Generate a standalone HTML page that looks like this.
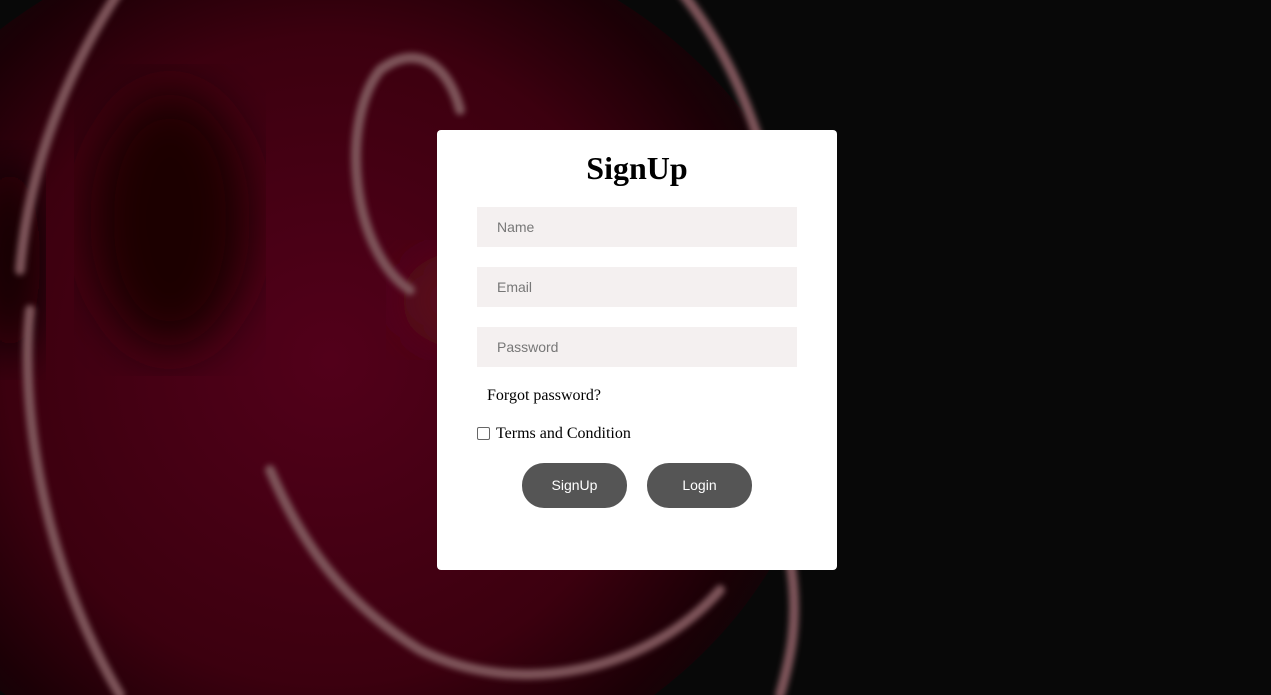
<!DOCTYPE html>
<html><head><meta charset="utf-8"><style>
html,body{margin:0;padding:0;width:1271px;height:695px;overflow:hidden;background:#080808;}
.bg{position:absolute;left:0;top:0;width:1271px;height:695px;display:block;}
.card{position:absolute;left:437px;top:130px;width:400px;height:440px;background:#fff;border-radius:4px;}
h1{position:absolute;left:0;width:400px;top:20px;margin:0;text-align:center;font:bold 32px "Liberation Serif",serif;color:#000;}
.in{position:absolute;left:40px;width:300px;height:40px;background:#f4f0f0;padding-left:20px;font:14px "Liberation Sans",sans-serif;color:#777;line-height:40px;}
.t{position:absolute;font:16px "Liberation Serif",serif;color:#000;}
.cb{position:absolute;left:40px;top:297px;width:11px;height:11px;border:1px solid #666;border-radius:2px;background:#fff;}
.btn{position:absolute;top:333px;width:105px;height:45px;border-radius:22px;background:#555;color:#fff;font:14px "Liberation Sans",sans-serif;text-align:center;line-height:45px;}
</style></head><body>
<svg class="bg" width="1271" height="695" viewBox="0 0 1271 695">
<defs>
<radialGradient id="r1" cx="330" cy="360" r="540" gradientUnits="userSpaceOnUse">
<stop offset="0" stop-color="#52001a"/><stop offset="0.6" stop-color="#3c000f"/><stop offset="0.82" stop-color="#1c0006"/><stop offset="1" stop-color="#080808"/></radialGradient>
<filter id="b"><feGaussianBlur stdDeviation="3"/></filter>
<filter id="b2"><feGaussianBlur stdDeviation="25"/></filter>
</defs>
<rect width="1271" height="695" fill="#080808"/>
<ellipse cx="330" cy="360" rx="500" ry="440" fill="url(#r1)"/>
<ellipse cx="170" cy="220" rx="80" ry="130" fill="#1a0005" filter="url(#b2)"/>
<ellipse cx="10" cy="260" rx="30" ry="100" fill="#100003" filter="url(#b2)"/>
<ellipse cx="470" cy="300" rx="70" ry="50" fill="#5a0a1e" filter="url(#b2)"/>
<g fill="none" stroke="#7e545a" stroke-width="10" stroke-linecap="round" filter="url(#b)">
<path d="M30 310 C20 400 40 560 120 695"/>
<path d="M20 270 C30 150 80 50 120 -10"/>
<path d="M680 -10 C720 40 750 100 770 180"/>
<path d="M410 290 C350 250 340 120 380 70 C420 40 450 70 460 110"/>
<path d="M270 470 C300 540 340 600 420 650 C520 700 650 670 720 590"/>
<path d="M790 560 C800 620 790 660 780 695"/>
</g>
</svg>
<div class="card">
<h1>SignUp</h1>
<div class="in" style="top:77px">Name</div>
<div class="in" style="top:137px">Email</div>
<div class="in" style="top:197px">Password</div>
<div class="t" style="left:50px;top:257px">Forgot password?</div>
<div class="cb"></div>
<div class="t" style="left:59px;top:295px">Terms and Condition</div>
<div class="btn" style="left:85px">SignUp</div>
<div class="btn" style="left:210px">Login</div>
</div>
</body></html>
